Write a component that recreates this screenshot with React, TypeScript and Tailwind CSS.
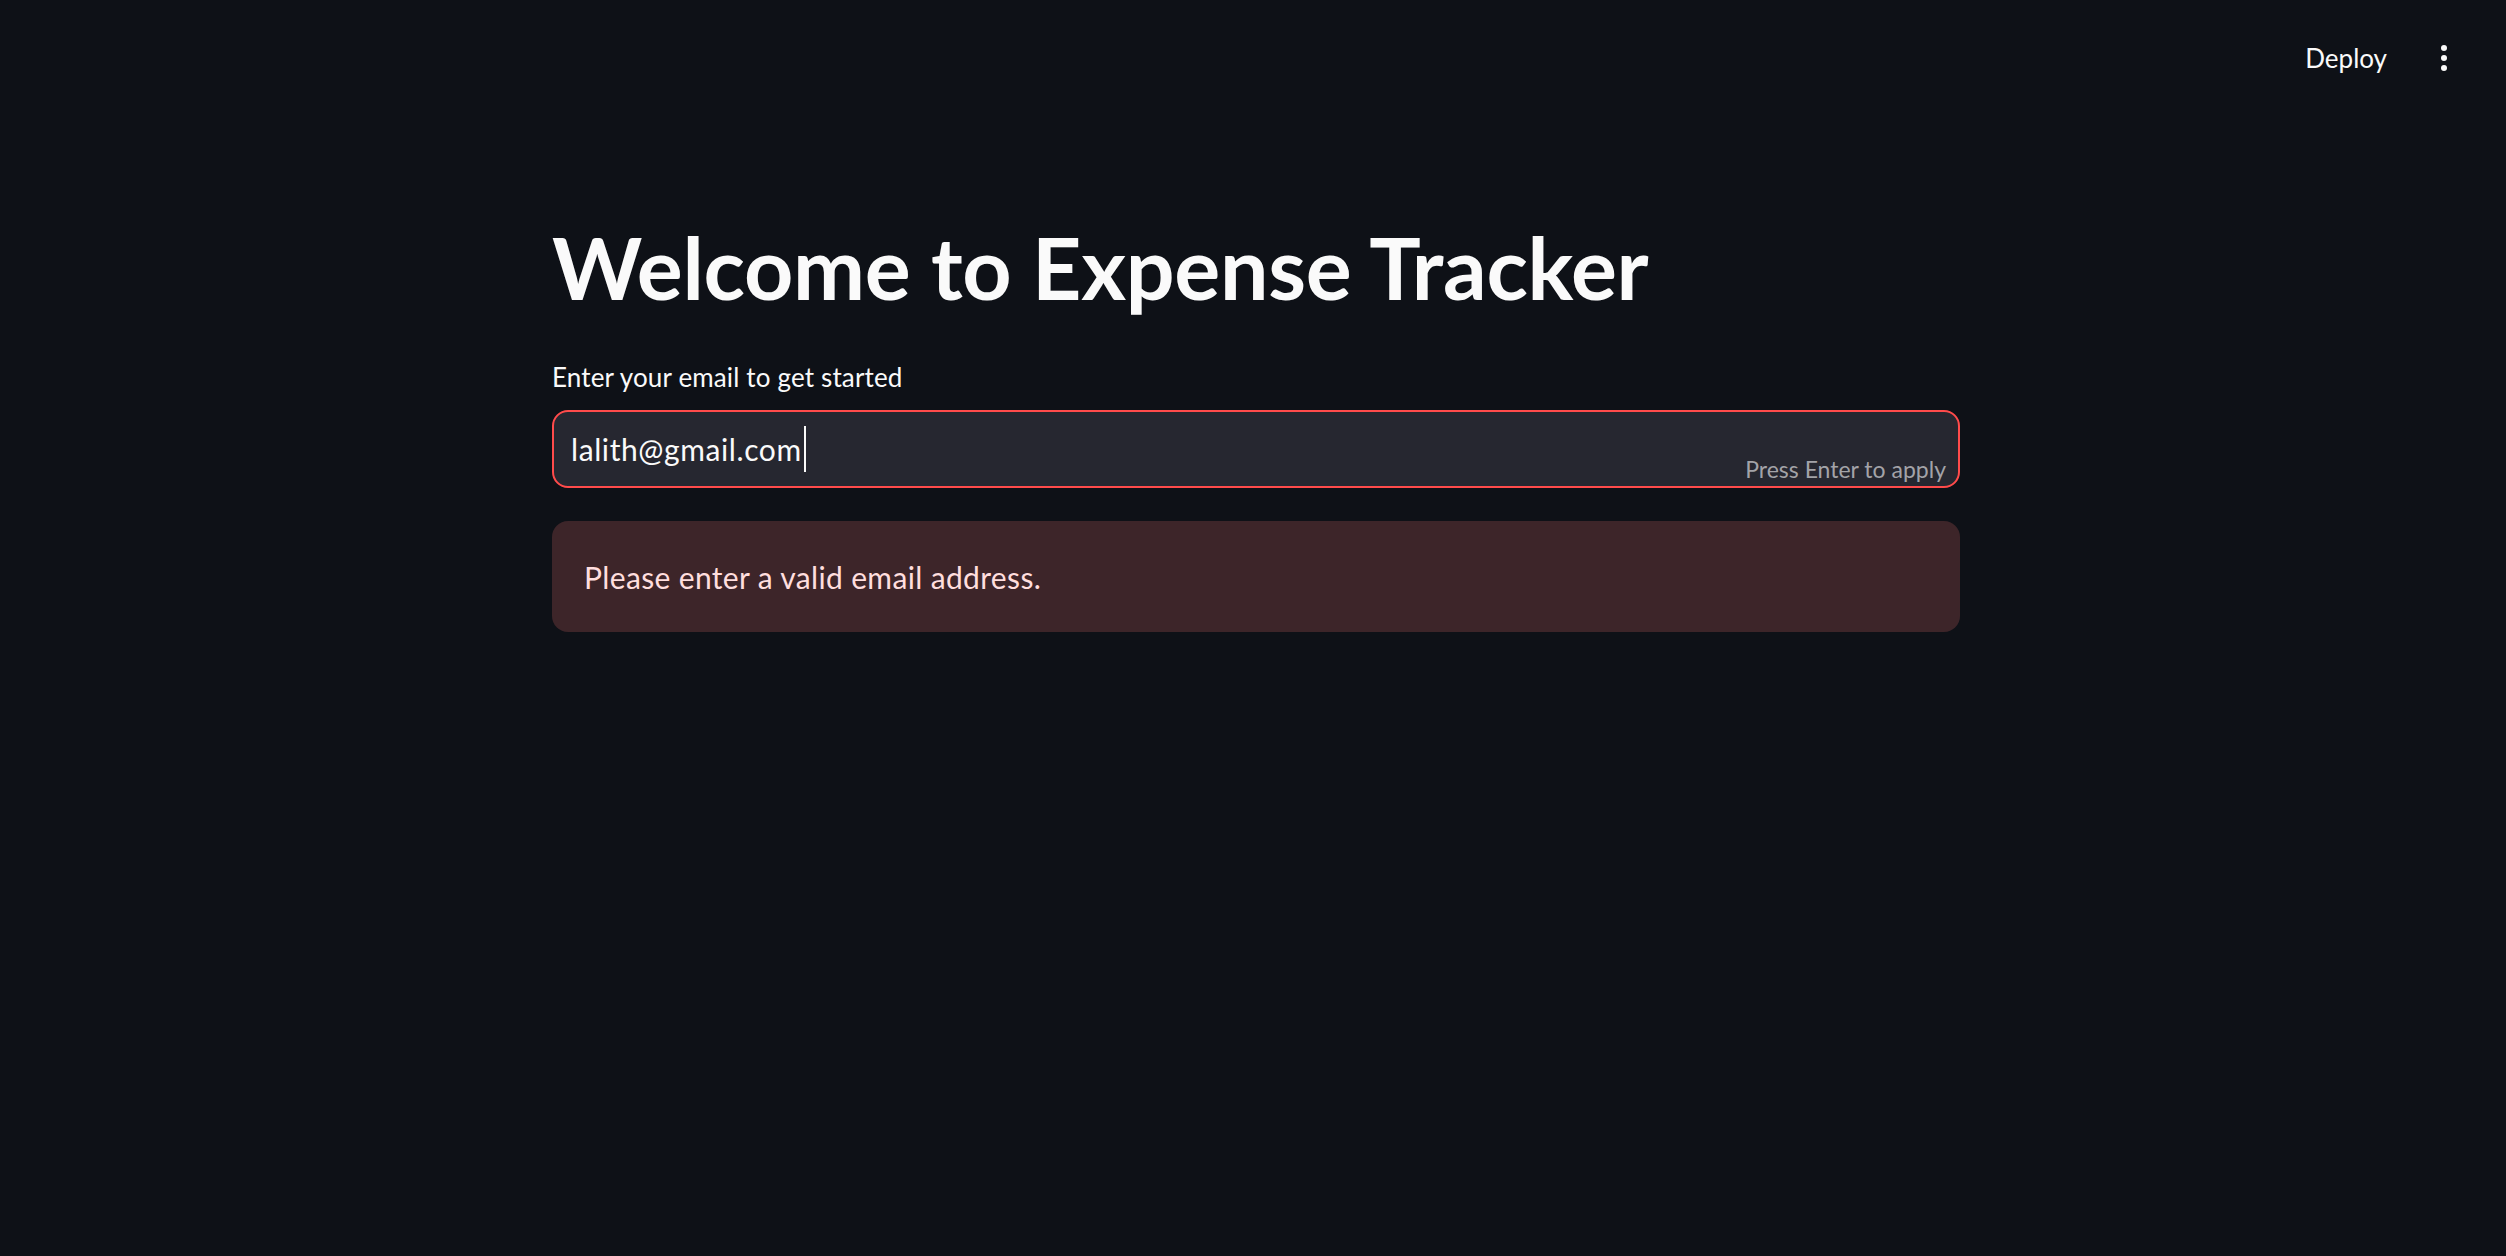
import React from "react";

const TopBar: React.FC = () => {
  return (
    <header className="h-[116px] flex items-center justify-end pr-[59px]">
      <button className="text-[26px] leading-none text-[#fafafa]">Deploy</button>
      <div className="ml-[54px] flex flex-col items-center gap-[4px]">
        <span className="block w-[6px] h-[6px] rounded-full bg-[#fafafa]" />
        <span className="block w-[6px] h-[6px] rounded-full bg-[#fafafa]" />
        <span className="block w-[6px] h-[6px] rounded-full bg-[#fafafa]" />
      </div>
    </header>
  );
};

const App: React.FC = () => {
  return (
    <div className="min-h-screen w-full bg-[#0e1117] font-['Lato',sans-serif]">
      <TopBar />

      <main className="w-[1408px] mx-auto pt-[108px] translate-x-[3px]">
        <h1 className="text-[86px] leading-none font-bold tracking-[-0.3px] text-[#fafafa]">
          Welcome to Expense Tracker
        </h1>

        <label className="block mt-[54px] text-[26px] leading-none tracking-[0.15px] text-[#fafafa]">
          Enter your email to get started
        </label>

        <div className="relative mt-[20px] h-[78px] rounded-[16px] border-2 border-[#ff4b4b] bg-[#262730] flex items-center pl-[17px]">
          <span className="text-[30px] leading-none tracking-[0.6px] text-[#fafafa]">lalith@gmail.com</span>
          <span className="ml-[2px] w-[2px] h-[46px] bg-[#fafafa]" />
          <span className="absolute right-[12px] bottom-[5px] text-[23px] leading-none text-[#a3a3a8]">
            Press Enter to apply
          </span>
        </div>

        <div className="mt-[33px] h-[111px] rounded-[16px] bg-[#3d2529] flex items-center pl-[32px]">
          <p className="text-[30px] leading-none tracking-[0.35px] text-[#ffdede]">
            Please enter a valid email address.
          </p>
        </div>
      </main>
    </div>
  );
};

export default App;
